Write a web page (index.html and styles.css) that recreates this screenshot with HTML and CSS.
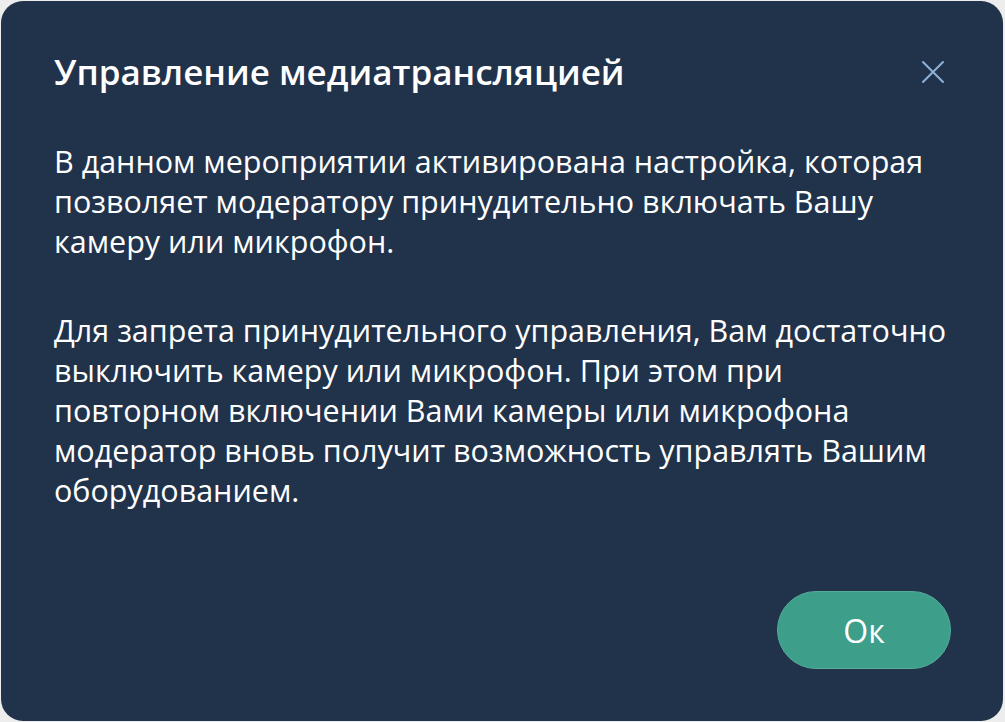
FILE: index.html
```html
<!DOCTYPE html>
<html lang="ru">
<head>
<meta charset="utf-8">
<title>Управление медиатрансляцией</title>
<link rel="stylesheet" href="styles.css">
</head>
<body>
<div class="dialog">
  <div class="header">
    <h1 class="title">Управление медиатрансляцией</h1>
    <button class="close" aria-label="Закрыть">
      <svg width="24" height="24" viewBox="0 0 24 24"><path d="M2 2 L22 22 M22 2 L2 22" stroke="#8fb1d6" stroke-width="2" stroke-linecap="round" fill="none"/></svg>
    </button>
  </div>
  <div class="content">
    <p>В данном мероприятии активирована настройка, которая позволяет модератору принудительно включать Вашу камеру или микрофон.</p>
    <p>Для запрета принудительного управления, Вам достаточно выключить камеру или микрофон. При этом при повторном включении Вами камеры или микрофона модератор вновь получит возможность управлять Вашим оборудованием.</p>
  </div>
  <div class="footer">
    <button class="ok">Ок</button>
  </div>
</div>
</body>
</html>
```

FILE: styles.css
```css
html, body {
  margin: 0;
  padding: 0;
  background: #ededed;
}
body {
  padding: 1px;
  font-family: "Open Sans", "Noto Sans", sans-serif;
}
.dialog {
  box-sizing: border-box;
  width: 1002px;
  height: 720px;
  background: #21324b;
  border-radius: 22px;
  padding: 49px 52px 52px 53px;
  display: flex;
  flex-direction: column;
  color: #ffffff;
}
.header {
  display: flex;
  align-items: center;
  justify-content: space-between;
}
.title {
  margin: 0;
  font-size: 35px;
  font-weight: 600;
  line-height: 44px;
}
.close {
  background: none;
  border: 0;
  padding: 0;
  margin-right: 6px;
  width: 24px;
  height: 24px;
  display: flex;
}
.content {
  margin-top: 47px;
  margin-right: -3px;
  flex: 1;
}
.content p {
  margin: 0 0 49px 0;
  font-size: 30.5px;
  line-height: 40px;
}
.footer {
  display: flex;
  justify-content: flex-end;
}
.ok {
  width: 174px;
  height: 78px;
  border-radius: 39px;
  background: #3d9e8a;
  border: 1px solid #55ad9a;
  color: #ffffff;
  font-family: "Open Sans", "Noto Sans", sans-serif;
  font-size: 32px;
  padding: 0;
}
```
